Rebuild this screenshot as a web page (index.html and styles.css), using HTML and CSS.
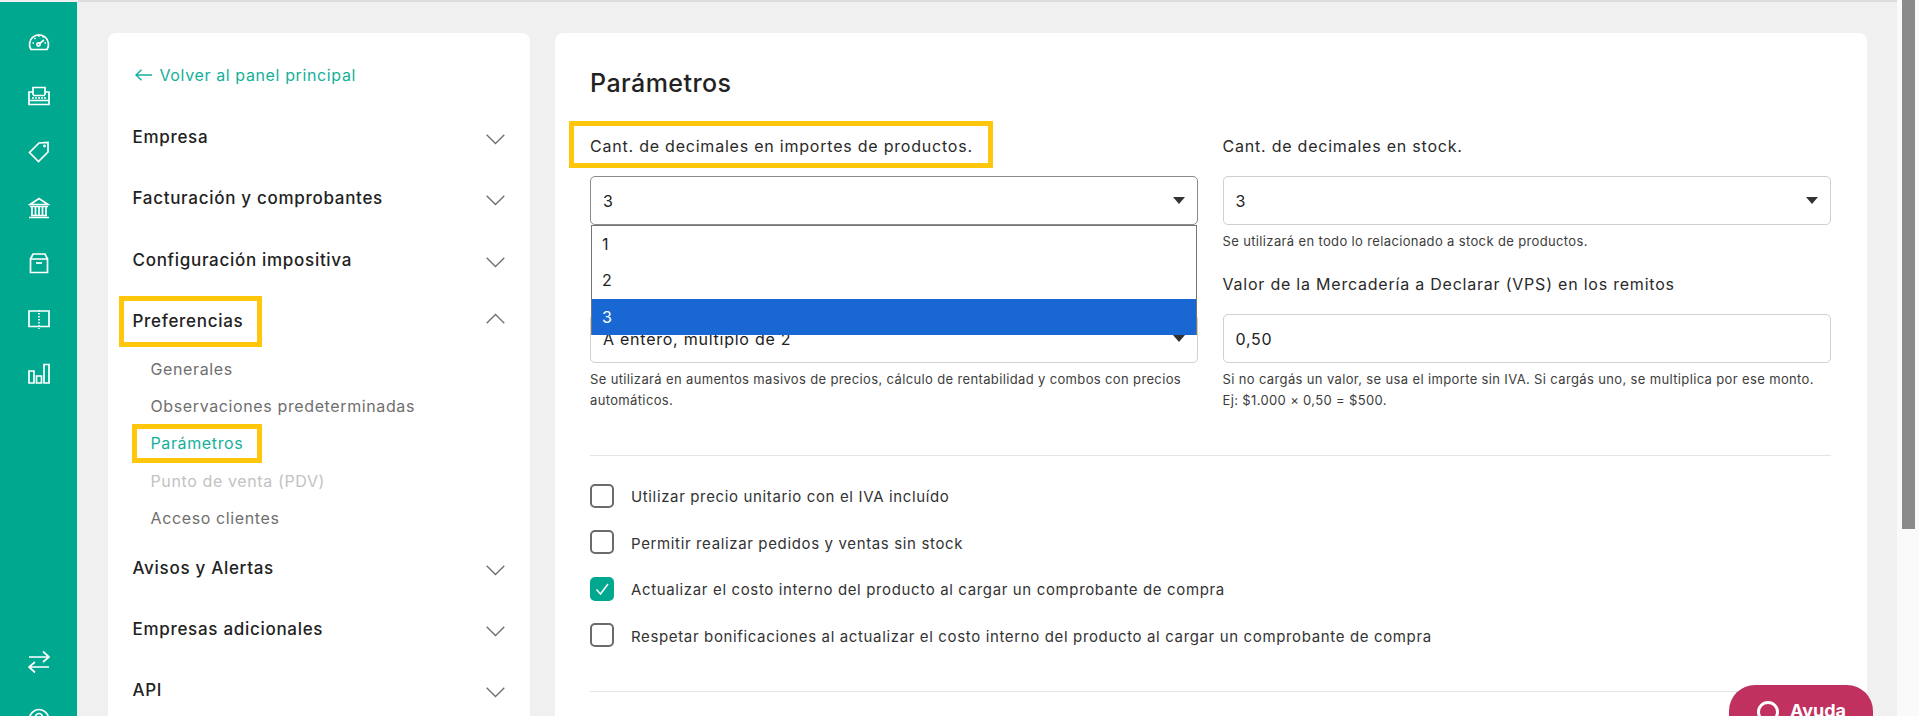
FILE: index.html
```html
<!DOCTYPE html>
<html lang="es">
<head>
<meta charset="utf-8">
<title>Parámetros</title>
<link rel="stylesheet" href="styles.css">
</head>
<body>
<div class="app">
  <nav class="rail">
    <svg class="rail-icon" viewBox="0 0 22 22"><path d="M3 19.500h16a9.500 9.500 0 1 0-16 0z"/><path d="M11 14l5-4"/><circle cx="10.500" cy="14.500" r="1.600"/><path d="M4.500 13h1.500M6.500 8l1 1M11 5.200v1.600M15.500 6.500l-.8 1M16.500 13h1.500"/></svg>
    <svg class="rail-icon" viewBox="0 0 22 22"><path d="M5 9V1.500h12V9"/><path d="M5 6H1v12.500h20V6h-4"/><path d="M5 9.500h12M1 14.500h20"/><path d="M4 12h14" stroke-dasharray="2 1"/></svg>
    <svg class="rail-icon" viewBox="0 0 22 22"><path d="M20 1.500v9.500L10.500 20.500 1.500 11.500 11 2z"/><circle cx="16.500" cy="5" r=".6"/></svg>
    <svg class="rail-icon" viewBox="0 0 22 22"><path d="M2 7.500L11 1.500l9 6z"/><path d="M2 9.500h18M3 18.500h16M1 20.500h20"/><path d="M4 10v8M7.500 10v8M11 10v8M14.500 10v8M18 10v8"/></svg>
    <svg class="rail-icon" viewBox="0 0 22 22"><path d="M2.500 7v13.500h17V7z"/><path d="M2.500 7L5 2h12l2.500 5"/><path d="M8 11h6"/></svg>
    <svg class="rail-icon" viewBox="0 0 22 22"><path d="M1 3h20v15.500H1z"/><path d="M11 2v19" stroke-dasharray="1.500 1.500"/></svg>
    <svg class="rail-icon" viewBox="0 0 22 22"><path d="M1 8h5v12H1zM8.500 13h5v7h-5zM16 1.500h5V20h-5z"/></svg>
    <svg class="rail-icon rail-swap" viewBox="0 0 22 24"><path d="M1 7h20M15 1.500L21 7l-6 5M21 17H1M7 12l-6 5 6 5.500"/></svg>
    <svg class="rail-icon" viewBox="0 0 22 22"><circle cx="11" cy="11" r="9.500"/><circle cx="11" cy="9" r="3.500"/></svg>
  </nav>

  <main class="content">
    <aside class="menu">
      <a class="back">
        <svg class="back-arrow" viewBox="0 0 17 12"><path d="M17 6H1M6.500.7L1 6l5.500 5.300"/></svg>
        Volver al panel principal
      </a>
      <ul class="menu-list">
        <li class="menu-row"><span>Empresa</span><svg class="chev" viewBox="0 0 19 11"><path d="M.7.7l8.800 8.800L18.300.7"/></svg></li>
        <li class="menu-row"><span>Facturación y comprobantes</span><svg class="chev" viewBox="0 0 19 11"><path d="M.7.7l8.800 8.800L18.300.7"/></svg></li>
        <li class="menu-row"><span>Configuración impositiva</span><svg class="chev" viewBox="0 0 19 11"><path d="M.7.7l8.800 8.800L18.300.7"/></svg></li>
        <li class="menu-row"><span class="mark mark-pref">Preferencias</span><svg class="chev chev-up" viewBox="0 0 19 11"><path d="M.7 10.300L9.500 1.500l8.800 8.800"/></svg></li>
        <li class="sub sub-first">Generales</li>
        <li class="sub">Observaciones predeterminadas</li>
        <li class="sub sub-active"><span class="mark mark-sub">Parámetros</span></li>
        <li class="sub sub-off">Punto de venta (PDV)</li>
        <li class="sub">Acceso clientes</li>
        <li class="menu-row"><span>Avisos y Alertas</span><svg class="chev" viewBox="0 0 19 11"><path d="M.7.7l8.800 8.800L18.300.7"/></svg></li>
        <li class="menu-row"><span>Empresas adicionales</span><svg class="chev" viewBox="0 0 19 11"><path d="M.7.7l8.800 8.800L18.300.7"/></svg></li>
        <li class="menu-row"><span>API</span><svg class="chev" viewBox="0 0 19 11"><path d="M.7.7l8.800 8.800L18.300.7"/></svg></li>
      </ul>
    </aside>

    <section class="panel">
      <h1 class="title">Parámetros</h1>
      <div class="fields">
        <div class="field">
          <label class="label"><span class="mark mark-label">Cant. de decimales en importes de productos.</span></label>
          <div class="select-wrap">
            <div class="select select-open"><span>3</span><i class="caret"></i></div>
            <ul class="dropdown">
              <li class="option">1</li>
              <li class="option">2</li>
              <li class="option option-on">3</li>
            </ul>
          </div>
          <div class="help help-empty"></div>
        </div>
        <div class="field">
          <label class="label">Cant. de decimales en stock.</label>
          <div class="select"><span>3</span><i class="caret"></i></div>
          <p class="help">Se utilizará en todo lo relacionado a stock de productos.</p>
        </div>
        <div class="field">
          <div class="label"></div>
          <div class="select"><span>A entero, múltiplo de 2</span><i class="caret"></i></div>
          <p class="help">Se utilizará en aumentos masivos de precios, cálculo de rentabilidad y combos con precios automáticos.</p>
        </div>
        <div class="field">
          <label class="label">Valor de la Mercadería a Declarar (VPS) en los remitos</label>
          <div class="select"><span>0,50</span></div>
          <p class="help">Si no cargás un valor, se usa el importe sin IVA. Si cargás uno, se multiplica por ese monto.<br>Ej: $1.000 × 0,50 = $500.</p>
        </div>
      </div>
      <hr class="rule rule-top">
      <div class="checks">
        <div class="check"><i class="box"></i><span>Utilizar precio unitario con el IVA incluído</span></div>
        <div class="check"><i class="box"></i><span>Permitir realizar pedidos y ventas sin stock</span></div>
        <div class="check"><i class="box box-on"><svg viewBox="0 0 24 24"><path d="M6.500 12.500l4 4.500 7.500-10"/></svg></i><span>Actualizar el costo interno del producto al cargar un comprobante de compra</span></div>
        <div class="check"><i class="box"></i><span>Respetar bonificaciones al actualizar el costo interno del producto al cargar un comprobante de compra</span></div>
      </div>
      <hr class="rule rule-bottom">
    </section>
  </main>

  <div class="scrollbar"><div class="thumb"></div></div>
  <button class="help-btn"><i class="help-ring"></i><span>Ayuda</span></button>
</div>
</body>
</html>
```
FILE: styles.css
```css
* { box-sizing: border-box; }
html, body { margin: 0; height: 716px; overflow: hidden; }
body { font-family: "Inter", "Liberation Sans", sans-serif; color: #222; background: #f0f0f0; }
ul { list-style: none; margin: 0; padding: 0; }
.app { position: relative; display: flex; height: 716px; overflow: hidden; }

.rail { flex: 0 0 78px; height: 714px; margin-top: 2px; padding-top: 28px; background: #00a88f; border-right: 1px solid #dfeeea; display: flex; flex-direction: column; align-items: center; gap: 33.500px; overflow: hidden; }
.rail-icon { flex: none; width: 22px; height: 22px; fill: none; stroke: #fff; stroke-width: 1.7; }
.rail-swap { height: 24px; margin-top: 231.500px; }

.content { flex: 1; min-width: 0; display: flex; gap: 25px; padding: 31px 30px 0 30px; border-top: 2px solid #dcdcdc; }

.menu { flex: 0 0 422px; background: #fff; border-radius: 8px 8px 0 0; padding: 30px 0 0 24.500px; height: 700px; }
.back { display: flex; align-items: center; gap: 8px; padding-left: 2px; height: 24px; font-size: 16px; letter-spacing: .62px; color: #14b09a; }
.back-arrow { width: 17px; height: 12px; fill: none; stroke: #14b09a; stroke-width: 1.5; }
.menu-list { margin-top: 19.500px; }
.menu-row { display: flex; align-items: center; justify-content: space-between; height: 61.300px; padding-right: 25px; font-size: 17px; font-weight: 500; letter-spacing: .7px; color: #222; }
.chev { width: 19px; height: 11px; margin-top: 5px; fill: none; stroke: #6d6d6d; stroke-width: 1.3; }
.chev-up { margin-top: -5px; }
.sub { height: 37.300px; line-height: 37.300px; padding-left: 18px; font-size: 16px; letter-spacing: .62px; color: #6f6f6f; }
.sub-first { margin-top: -1px; }
.sub-active { color: #14b09a; }
.sub-off { color: #c2c2c2; }

.mark { position: relative; display: inline-block; }
.mark::after { content: ""; position: absolute; border: 5px solid #ffc60b; pointer-events: none; }
.mark-pref::after { inset: -15px -19px -16px -14px; }
.mark-sub::after { inset: -1.300px -18.500px 0 -18.500px; }
.mark-label::after { inset: -12.500px -20px -10.500px -21px; }

.panel { flex: 1; min-width: 0; background: #fff; border-radius: 8px 8px 0 0; padding: 31px 36px 0 35px; height: 700px; }
.title { margin: 0; height: 38px; line-height: 38px; font-size: 25px; font-weight: 500; letter-spacing: .45px; color: #222; }
.fields { margin-top: 31.500px; display: grid; grid-template-columns: 608px 608.500px; column-gap: 24.500px; row-gap: 20px; align-items: start; }
.field { min-width: 0; }
.label { display: block; height: 24px; line-height: 24px; margin-bottom: 18.500px; font-size: 16px; letter-spacing: .78px; color: #2a2a2a; white-space: nowrap; }
.select-wrap { position: relative; }
.select { display: flex; align-items: center; justify-content: space-between; height: 49px; padding: 0 12px; border: 1px solid #cfcfcf; border-radius: 5px; font-size: 16px; letter-spacing: .75px; color: #222; background: #fff; }
.select-open { border-color: #8a8a8a; }
.caret { width: 0; height: 0; border-left: 6px solid transparent; border-right: 6px solid transparent; border-top: 7px solid #333; }
.dropdown { position: absolute; z-index: 5; top: 49px; left: 1px; right: 1px; background: #fff; border: 1px solid #767676; border-bottom: 0; }
.option { height: 36.300px; line-height: 36px; padding-left: 10px; font-size: 16px; color: #222; }
.option-on { background: #1967d2; color: #fff; }
.help { margin: 5.500px 0 0; font-size: 13px; line-height: 21px; letter-spacing: .36px; color: #3d3d3d; }
.help-empty { height: 21px; }

.rule { margin: 0; border: 0; border-top: 1px solid #e5e5e5; }
.rule-top { margin-top: 44px; }
.rule-bottom { margin-top: 43.500px; }
.checks { margin-top: 28px; display: flex; flex-direction: column; gap: 22.670px; }
.check { display: flex; align-items: center; gap: 17px; height: 24px; font-size: 15px; letter-spacing: .64px; color: #333; }
.check span { padding-top: 2px; }
.box { flex: none; width: 24px; height: 24px; border: 2px solid #6b6b6b; border-radius: 5px; background: #fff; }
.box-on { background: #00a88f; border-color: #00a88f; }
.box-on svg { display: block; width: 24px; height: 24px; margin: -2px; fill: none; stroke: #fff; stroke-width: 1.5; }

.scrollbar { flex: 0 0 22px; height: 716px; background: #fafafa; padding-left: 5px; }
.thumb { width: 13px; height: 529px; background: #8a8a8a; }

.help-btn { position: absolute; z-index: 6; left: 1729px; top: 685px; width: 144px; height: 60px; border: 0; border-radius: 26px; background: #c0315f; color: #fff; font-family: "Inter", sans-serif; font-size: 18px; font-weight: 700; display: flex; align-items: flex-start; gap: 11px; padding: 15px 0 0 28px; }
.help-ring { flex: none; width: 22px; height: 22px; margin-top: 1px; border: 3px solid #fff; border-radius: 50%; }
```
